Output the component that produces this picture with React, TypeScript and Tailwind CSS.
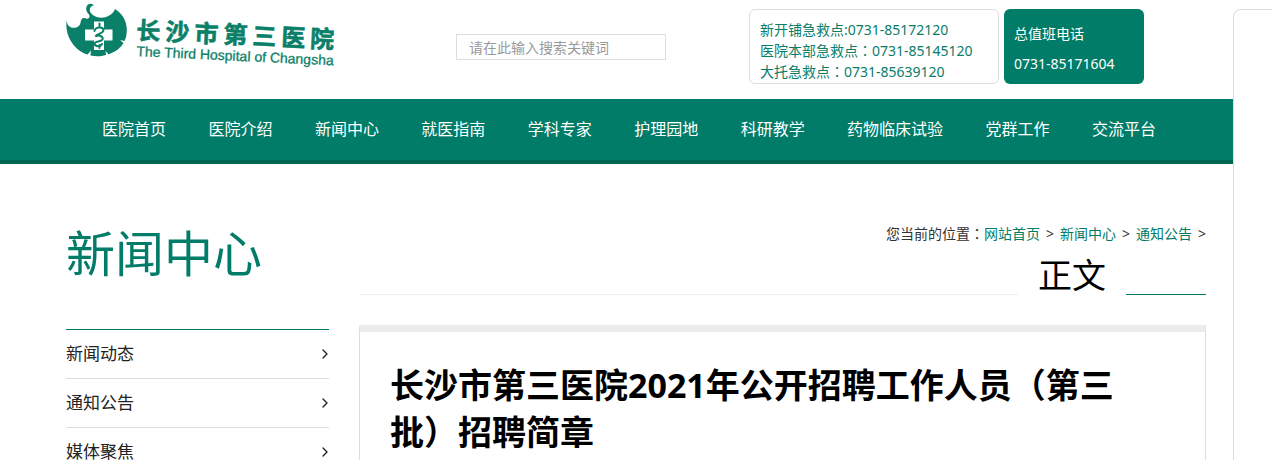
import { ChevronRight } from 'lucide-react';

const navItems = [
  '医院首页',
  '医院介绍',
  '新闻中心',
  '就医指南',
  '学科专家',
  '护理园地',
  '科研教学',
  '药物临床试验',
  '党群工作',
  '交流平台'
];

const sideItems = ['新闻动态', '通知公告', '媒体聚焦'];

const crumbs = ['网站首页', '新闻中心', '通知公告'];

// Centred full-width colon
function Colon() {
  return <span className="font-['Noto_Sans_CJK_TC',sans-serif]">：</span>;
}

function Logo() {
  return (
    <a href="#" aria-label="长沙市第三医院" className="block shrink-0">
      <svg width="274" height="72" viewBox="0 0 274 72" fill="#0a8068">
        <path d="M0.700 20.500 C1 24 2.500 27 6.500 27.800 C11 28.300 14 26 14.700 22 C14.800 19 17 17 20 18.500 C22.500 19.500 24.500 17 23 14.500 C21 12.500 19.500 10 20.500 7 C21.500 4 25 2.500 28 5.500 C25.500 5.500 23.500 7.500 23.800 10.500 C24.500 14.500 30 17.800 35.500 17.700 C42 17.500 47.500 13.500 49 9 C56 13.500 61 21 60.800 30 C60.700 35 60 38 58.500 41 L54 40 L57.500 43 C54 49 48 52.500 42.500 54.200 L39.500 51 L40 55 C34 56.800 29 56.500 24.500 55.500 L25 50.500 L21.500 54.500 C8 50 -1.500 36 0.700 20.500 Z" />
        <path d="M28 21.500h10v8h8.500v11h-8.500v9.500h-10v-9.500h-9v-11h9z" fill="#fff" />
        <path
          d="M33.500 23.500v3 M28.500 31 C29 27 37 26 37.500 30 C37.500 34 31 33 29.500 36.500 C32 34.500 38 36 36.500 39.500 C35 42 29 41 28.500 43.500 C29 47 34.500 47 36 44 M33.500 45v3"
          fill="none"
          stroke="#0a8068"
          strokeWidth="2"
          strokeLinecap="round"
        />
        <g transform="rotate(2.700 70 40)">
          {'长沙市第三医院'.split('').map((char, i) => (
            <text
              key={char}
              x={70 + i * 29}
              y="39"
              fontSize="24"
              stroke="#0a8068"
              strokeWidth="0.600"
              className="font-['Noto_Sans_CJK_SC',sans-serif] font-bold"
            >
              {char}
            </text>
          ))}
          <text x="71" y="56" fontSize="14" stroke="#0a8068" strokeWidth="0.300" className="font-['Liberation_Sans',sans-serif]">
            The Third Hospital of Changsha
          </text>
        </g>
      </svg>
    </a>
  );
}

function Header() {
  return (
    <header className="flex h-[99px] items-start pl-[66px]">
      <Logo />
      <form className="ml-[116px] mt-[34px]">
        <input
          type="text"
          aria-label="搜索"
          placeholder="请在此输入搜索关键词"
          className="block h-[26px] w-[210px] border border-[#ddd] bg-white px-3 text-sm text-gray-600 placeholder:text-[#999] outline-none"
        />
      </form>
      <div className="ml-[83px] mt-[9px] h-[75px] w-[250px] rounded-md border border-[#ddd] px-[10px] pt-[9px] text-sm leading-[21px] text-[#0a7d69]">
        <p>新开铺急救点:0731-85172120</p>
        <p>医院本部急救点<Colon />0731-85145120</p>
        <p>大托急救点<Colon />0731-85639120</p>
      </div>
      <div className="ml-[5px] mt-[9px] h-[75px] w-[140px] rounded-md bg-[#007c68] px-[10px] pt-[10px] text-sm leading-[30px] text-white">
        <p>总值班电话</p>
        <p>0731-85171604</p>
      </div>
    </header>
  );
}

function Nav() {
  return (
    <nav className="border-b-4 border-[#006652] bg-[#007c68] pl-[102px] pr-[77px]">
      <ul className="flex justify-between text-base leading-[61px] text-white">
        {navItems.map(item => (
          <li key={item}>
            <a href="#">{item}</a>
          </li>
        ))}
      </ul>
    </nav>
  );
}

function Sidebar() {
  return (
    <aside className="w-[263px] shrink-0">
      <h2 className="text-[49px] leading-[60px] text-[#007c68]">新闻中心</h2>
      <ul className="mt-[46px] border-t border-[#007c68] text-[17px] leading-[48px] text-[#222]">
        {sideItems.map(item => (
          <li key={item} className="border-b border-[#ddd]">
            <a href="#" className="flex items-center justify-between">
              {item}
              <ChevronRight className="-mr-1 h-4 w-4" />
            </a>
          </li>
        ))}
      </ul>
    </aside>
  );
}

function Article() {
  return (
    <main className="min-w-0 flex-1">
      <div className="flex items-baseline justify-end text-sm leading-[20px] text-[#333]">
        <span>您当前的位置<Colon /></span>
        <ol className="flex gap-[6px]">
          {crumbs.map(crumb => (
            <li key={crumb} className="flex gap-[6px]">
              <a href="#" className="text-[#007c68]">{crumb}</a>
              <span>&gt;</span>
            </li>
          ))}
        </ol>
      </div>
      <div className="mt-[12px] flex items-end">
        <div className="h-px flex-1 bg-[#eee]" />
        <h3 className="px-[20px] text-[34px] leading-[39px] text-black">正文</h3>
        <div className="h-px w-[80px] bg-[#007c68]" />
      </div>
      <article className="mt-[30px] border border-t-[7px] border-[#ddd] border-t-[#ececec] pb-10 pl-[30px] pr-14 pt-[30px]">
        <h1 className="text-[34px] font-bold leading-[47px] text-black">
          长沙市第三医院2021年公开招聘工作人员（第三批）招聘简章
        </h1>
      </article>
    </main>
  );
}

export default function App() {
  return (
    <div className="flex h-screen overflow-hidden bg-white font-['Noto_Sans','Noto_Sans_CJK_SC',sans-serif]">
      <div className="min-w-0 flex-1">
        <Header />
        <Nav />
        <div className="flex gap-[30px] pl-[66px] pr-[27px] pt-[59px]">
          <Sidebar />
          <Article />
        </div>
      </div>
      <div className="mt-[9px] w-[39px] shrink-0 rounded-tl-lg border-l border-t border-[#ddd]" />
    </div>
  );
}
